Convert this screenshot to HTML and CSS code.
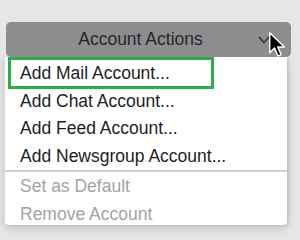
FILE: index.html
```html
<!DOCTYPE html>
<html lang="en">
<head>
    <meta charset="UTF-8">
    <title>Account Actions</title>
    <link rel="stylesheet" href="styles.css">
</head>
<body>
    <div class="panel">
        <div class="actions-button">
            <span class="actions-label">Account Actions</span>
            <svg class="chevron" width="12" height="8" viewBox="0 0 12 8">
                <polyline points="1,1 6,6.5 11,1" fill="none" stroke="#2b2b2b" stroke-width="1.4"/>
            </svg>
            <svg class="cursor" width="18" height="28" viewBox="0 0 16 25">
                <path d="M1.5 1.5 L1.5 19.5 L5.8 15.2 L8.8 22.3 L11.6 21.1 L8.7 14.2 L14.6 14.2 Z" fill="#000" stroke="#fff" stroke-width="1.3" stroke-linejoin="round"/>
            </svg>
        </div>
        <ul class="menu">
            <li class="menu-item">Add Mail Account...<span class="highlight"></span></li>
            <li class="menu-item">Add Chat Account...</li>
            <li class="menu-item">Add Feed Account...</li>
            <li class="menu-item">Add Newsgroup Account...</li>
            <li class="separator"></li>
            <li class="menu-item disabled">Set as Default</li>
            <li class="menu-item disabled">Remove Account</li>
        </ul>
    </div>
</body>
</html>
```

FILE: styles.css
```css
body {
    margin: 0;
    padding: 0;
    font-family: "Liberation Sans", Arial, sans-serif;
    background-color: #e6e6e8;
    width: 300px;
    height: 240px;
    overflow: hidden;
}

.panel {
    display: flex;
    flex-direction: column;
    padding: 22px 0 0 5px;
}

.actions-button {
    position: relative;
    width: 285px;
    height: 35px;
    margin-left: 1px;
    background-color: #8d8d90;
    border-radius: 5px;
    display: flex;
    align-items: center;
    justify-content: center;
    box-sizing: border-box;
    padding-right: 16px;
}

.actions-label {
    font-size: 17.5px;
    color: #262626;
}

.chevron {
    position: absolute;
    left: 252px;
    top: 14px;
}

.cursor {
    position: absolute;
    left: 262px;
    top: 9px;
}

.menu {
    list-style: none;
    margin: 0;
    padding: 3px 0 0 0;
    width: 282px;
    height: 168px;
    box-sizing: border-box;
    background-color: #ffffff;
    border-radius: 0 0 4px 4px;
    box-shadow: 0 3px 8px rgba(0, 0, 0, 0.18), 2px 0 3px rgba(0, 0, 0, 0.08);
}

.menu-item {
    position: relative;
    height: 27.5px;
    line-height: 27.5px;
    padding-left: 15px;
    font-size: 17.5px;
    color: #1d1d1d;
    white-space: nowrap;
}

.menu-item.disabled {
    color: #a3a3a3;
}

.separator {
    height: 2px;
    margin: 0 0 1px 0;
    background-color: #d0d0d2;
}

.highlight {
    position: absolute;
    left: 3px;
    top: -3px;
    width: 206px;
    height: 32px;
    box-sizing: border-box;
    border: 3px solid #2eab4c;
}
```
